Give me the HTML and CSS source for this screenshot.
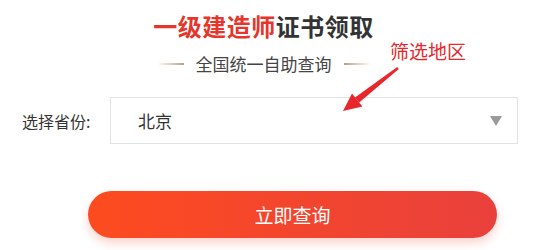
FILE: index.html
```html
<!DOCTYPE html>
<html lang="zh-CN">
<head>
    <meta charset="UTF-8">
    <meta name="viewport" content="width=device-width, initial-scale=1.0">
    <title>一级建造师证书领取</title>
    <link rel="stylesheet" href="styles.css">
</head>
<body>
    <div class="page">
        <div class="header">
            <h1 class="title"><span class="red">一级建造师</span>证书领取</h1>
            <div class="subtitle">
                <span class="line line-left"></span>
                <span>全国统一自助查询</span>
                <span class="line line-right"></span>
            </div>
        </div>

        <div class="form-row">
            <label class="form-label">选择省份:</label>
            <div class="select-box">
                <span class="select-value">北京</span>
                <span class="select-arrow"></span>
            </div>
        </div>

        <button class="btn-query">立即查询</button>

        <!-- annotation over the form -->
        <div class="note">筛选地区</div>
        <svg class="note-arrow" width="80" height="60" viewBox="336 60 80 60">
            <polygon points="398.8,69 397.2,67 355,97.4 359.2,102.4" fill="#e8262b"/>
            <polygon points="343,111 352,93.4 362.4,106.4" fill="#e8262b"/>
        </svg>
    </div>
</body>
</html>
```

FILE: styles.css
```css
body {
    margin: 0;
    font-family: "Noto Sans CJK SC", "Noto Sans", sans-serif;
    color: #333;
    background-color: #fff;
}
.page {
    position: relative;
    width: 539px;
    height: 250px;
    overflow: hidden;
}
.header {
    width: 527px;
    padding-top: 11px;
    text-align: center;
}
.title {
    margin: 0;
    font-size: 24px;
    line-height: 30px;
    font-weight: bold;
    letter-spacing: 0.5px;
    color: #333;
}
.title .red {
    color: #e6352b;
}
.subtitle {
    margin-top: 11px;
    display: flex;
    justify-content: center;
    align-items: center;
    gap: 12px;
    font-size: 17px;
    line-height: 24px;
    color: #444;
}
.line {
    width: 27px;
    height: 2px;
}
.line-left {
    background: linear-gradient(to right, rgba(200,175,150,0), #b89f88);
}
.line-right {
    background: linear-gradient(to right, #b89f88, rgba(200,175,150,0));
}
.form-row {
    margin-top: 21px;
    display: flex;
    align-items: center;
    padding-left: 22px;
}
.form-label {
    width: 88px;
    font-size: 16px;
    color: #333;
}
.select-box {
    box-sizing: border-box;
    width: 408px;
    height: 47px;
    border: 1px solid #e3e3e3;
    display: flex;
    align-items: center;
    justify-content: space-between;
    padding: 0 15px 0 27px;
}
.select-value {
    font-size: 17px;
    color: #333;
}
.select-arrow {
    width: 0;
    height: 0;
    border-left: 6px solid transparent;
    border-right: 6px solid transparent;
    border-top: 10px solid #9a9a9a;
}
.btn-query {
    display: block;
    margin: 47px 0 0 88px;
    width: 409px;
    height: 47px;
    border: none;
    border-radius: 24px;
    background: linear-gradient(to right, #fd4b1f, #e9403c);
    box-shadow: 0 5px 10px rgba(240, 80, 60, 0.25);
    color: #fff;
    font-family: inherit;
    font-size: 19px;
    padding: 0;
}
.note {
    position: absolute;
    left: 390px;
    top: 38px;
    font-size: 19px;
    line-height: 26px;
    color: #e8262b;
}
.note-arrow {
    position: absolute;
    left: 336px;
    top: 60px;
}
```
